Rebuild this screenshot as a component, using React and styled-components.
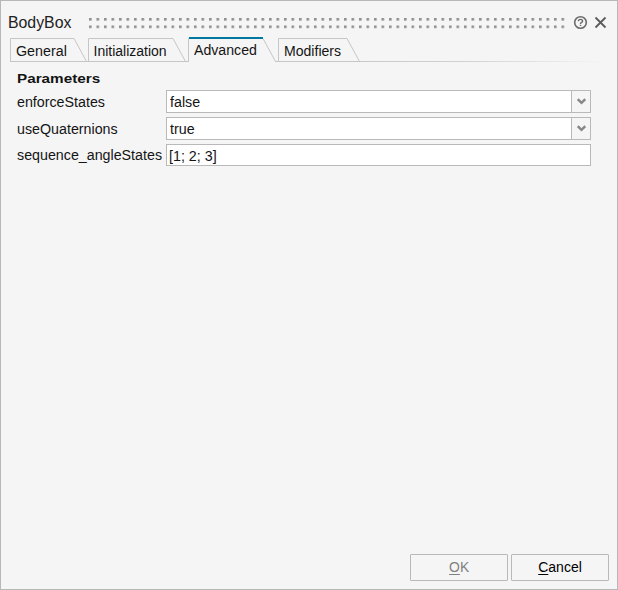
import React from "react";
import styled, { createGlobalStyle } from "styled-components";

const GlobalStyle = createGlobalStyle`
  * { box-sizing: border-box; }
  body { margin: 0; font-family: "Liberation Sans", Arial, sans-serif; }
`;

const Dialog = styled.main`
  width: 618px;
  height: 590px;
  display: flex;
  flex-direction: column;
  background: #f5f5f5;
  border: 1px solid #b8b8b8;
  color: #141414;
  font-size: 14px;
`;

const TitleBar = styled.header`
  height: 36px;
  flex: none;
  display: flex;
  align-items: center;
  padding: 7px 0 0 7px;
`;

const Label = styled.span`
  display: inline-block;
  white-space: nowrap;
  transform: scaleX(${(p) => p.$stretch || 1.02});
  transform-origin: ${(p) => (p.$centered ? "center" : "left")};
`;

const Title = styled.h1`
  width: 80px;
  flex: none;
  margin: 0;
  font-size: 16px;
  line-height: 20px;
  font-weight: 400;
  color: #222;
`;

const Grip = styled.svg`
  width: 481px;
  height: 12px;
  flex: none;
`;

const IconButton = styled.button`
  width: 16px;
  height: 16px;
  margin-left: 4px;
  padding: 0;
  border: 0;
  background: none;
  flex: none;
  svg { display: block; }
`;

const TabBar = styled.nav`
  height: 25px;
  flex: none;
  display: flex;
  padding-left: 9px;
`;

const Tab = styled.div`
  position: relative;
  width: ${(p) => p.$width}px;
  height: 25px;
  flex: none;
  padding: ${(p) => (p.$active ? 5 : 6)}px 0 0 ${(p) => p.$inset || 6}px;
  line-height: 17px;
`;

const TabOutline = styled.svg`
  position: absolute;
  left: 0;
  top: 0;
  overflow: visible;
`;

const TabRule = styled.div`
  flex: 1;
  align-self: flex-end;
  height: 1px;
  margin-right: 10px;
  background: linear-gradient(to right, #cacaca, #d0d0d0 40%, #f5f5f5);
`;

const Panel = styled.section`
  flex: 1;
  padding: 8px 26px 0 16px;
`;

const Heading = styled.h2`
  margin: 0;
  height: 20px;
  font-size: 13.5px;
  line-height: 17px;
  font-weight: 700;
`;

const Form = styled.div`
  display: grid;
  grid-template-columns: 149px 425px;
  grid-template-rows: 23px 23px 22px;
  row-gap: 4px;
`;

const FieldLabel = styled.div`
  line-height: ${(p) => (p.$text ? 23 : 25)}px;
`;

const Field = styled.div`
  display: flex;
  justify-content: space-between;
  border: 1px solid #b9b9b9;
  background: #fff;
  padding-left: ${(p) => (p.$text ? 2 : 3)}px;
  line-height: 23px;
`;

const DropButton = styled.span`
  width: 19px;
  display: flex;
  align-items: center;
  justify-content: center;
  border-left: 1px solid #b9b9b9;
  background: #f5f5f5;
`;

const Footer = styled.footer`
  display: flex;
  justify-content: flex-end;
  gap: 3px;
  padding: 0 8px 8px 0;
`;

const Button = styled.button`
  width: 98px;
  height: 27px;
  padding: 0 0 2px;
  border: 1px solid #b9b9b9;
  border-radius: 1px;
  background: #f5f5f5;
  color: ${(p) => (p.disabled ? "#808080" : "#000")};
  font: 14px "Liberation Sans", Arial, sans-serif;
  u { text-underline-offset: 2px; text-decoration-thickness: 1px; text-decoration-skip-ink: none; }
`;

const tabs = [
  { name: "General", width: 78, top: 64, foot: 76, stretch: 1.02 },
  { name: "Initialization", width: 100, top: 85, foot: 97, stretch: 1.0, inset: 5.5 },
  { name: "Advanced", width: 90, top: 75, foot: 87, stretch: 1.01, active: true },
  { name: "Modifiers", width: 82, top: 69, foot: 81, stretch: 1.005 },
];

const fields = [
  { name: "enforceStates", value: "false", select: true },
  { name: "useQuaternions", value: "true", select: true },
  { name: "sequence_angleStates", value: "[1; 2; 3]" },
];

function TabItem({ name, width, top, foot, stretch, inset, active }) {
  return (
    <Tab $width={width} $active={active} $inset={inset}>
      <TabOutline width={width} height="25" fill="none" stroke="#c6c6c6">
        <path d={`M.5 25V1.5H${top}L${foot + 0.5} 24.5`} />
        {active ? (
          <>
            <path d={`M${foot} 24.5H${width}`} />
            <path d={`M1 1H${top}`} stroke="#0078a0" strokeWidth="2" />
          </>
        ) : (
          <path d={`M0 24.5H${width}`} />
        )}
      </TabOutline>
      <Label $stretch={stretch}>{name}</Label>
    </Tab>
  );
}

export default function App() {
  return (
    <>
      <GlobalStyle />
      <Dialog>
        <TitleBar>
          <Title><Label $stretch={0.99}>BodyBox</Label></Title>
          <Grip>
            <defs>
              <pattern id="grip" x="1" y="1" width="7.5" height="7.5" patternUnits="userSpaceOnUse">
                <rect x="0" y="0" width="2.6" height="2.6" fill="#8f8f8f" />
              </pattern>
            </defs>
            <rect x="1" y="1" width="477" height="11" fill="url(#grip)" />
          </Grip>
          <IconButton aria-label="Help">
            <svg width="16" height="16" viewBox="0 0 16 16" fill="none" stroke="#6c6c6c">
              <circle cx="7.5" cy="7.5" r="5.8" strokeWidth="1.6" />
              <path d="M5.4 6.3C5.4 3.8 9.6 3.8 9.6 6.2C9.6 7.5 7.5 7.4 7.5 8.9M7.5 9.7V11" strokeWidth="1.4" />
            </svg>
          </IconButton>
          <IconButton aria-label="Close">
            <svg width="16" height="16" viewBox="0 0 16 16" stroke="#5c5c5c" strokeWidth="1.8">
              <path d="M2.5 2.5L12.5 12.5M12.5 2.5L2.5 12.5" />
            </svg>
          </IconButton>
        </TitleBar>
        <TabBar>
          {tabs.map((t) => <TabItem key={t.name} {...t} />)}
          <TabRule />
        </TabBar>
        <Panel>
          <Heading><Label $stretch={1.13}>Parameters</Label></Heading>
          <Form>
            {fields.map((f) => (
              <React.Fragment key={f.name}>
                <FieldLabel $text={!f.select}><Label $stretch={1.018}>{f.name}</Label></FieldLabel>
                <Field $text={!f.select}>
                  <Label $stretch={1.02}>{f.value}</Label>
                  {f.select && (
                    <DropButton>
                      <svg width="9" height="7" fill="none" stroke="#888" strokeWidth="2.5">
                        <path d="M.7 1.2L4.5 4.8L8.3 1.2" />
                      </svg>
                    </DropButton>
                  )}
                </Field>
              </React.Fragment>
            ))}
          </Form>
        </Panel>
        <Footer>
          <Button disabled><Label $centered $stretch={0.99}><u>O</u>K</Label></Button>
          <Button><Label $centered $stretch={1.0}><u>C</u>ancel</Label></Button>
        </Footer>
      </Dialog>
    </>
  );
}
